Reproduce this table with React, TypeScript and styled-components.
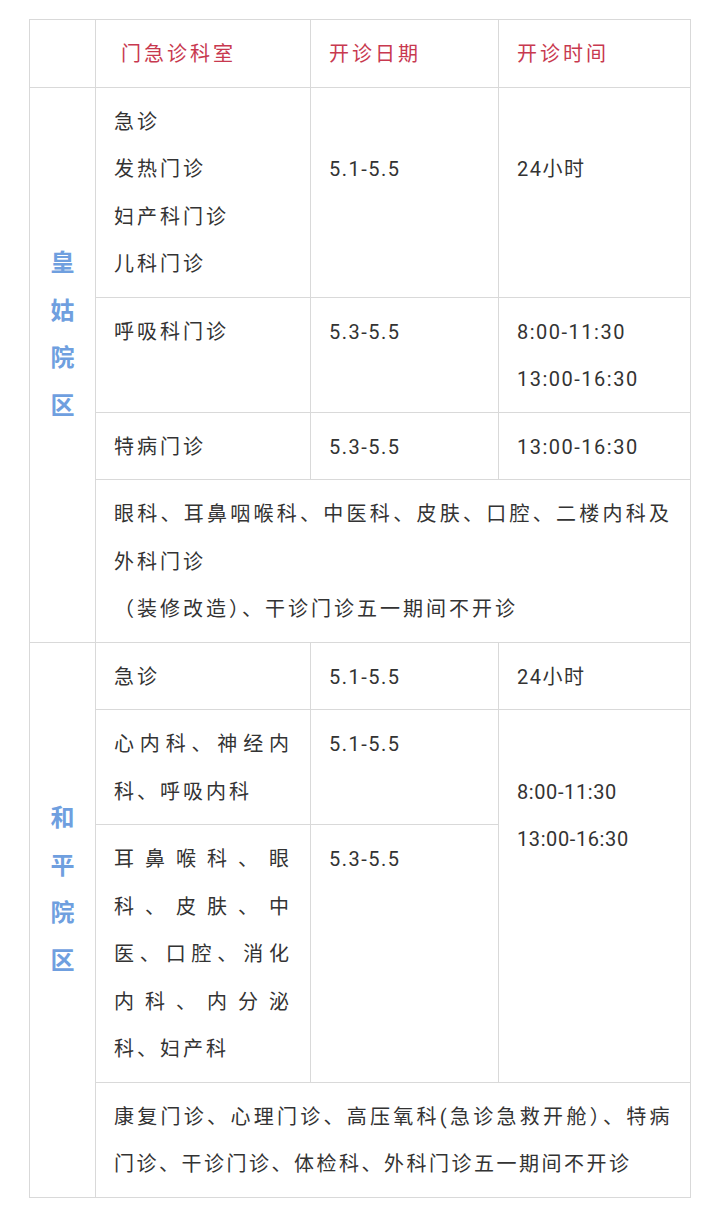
import styled, { createGlobalStyle } from 'styled-components';

const GlobalStyle = createGlobalStyle`
    html, body {
        margin: 0;
        padding: 0;
        background: #fff;
    }
    body {
        font-family: Roboto, 'Noto Sans CJK SC', sans-serif;
        color: #333;
    }
`;

const Page = styled.div`
    padding: 19px 0 0 29px;
`;

const Table = styled.table`
    width: 661px;
    table-layout: fixed;
    border-collapse: collapse;
    font-size: 20px;
    line-height: 47.5px;
`;

const Cell = styled.td<{ $head?: boolean; $spaced?: boolean; $justify?: boolean; $indent?: number }>`
    border: 1px solid #d9d9d9;
    padding: 11px 18px 8px;
    vertical-align: top;
    color: ${(p) => (p.$head ? '#c8394f' : '#333')};
    letter-spacing: ${(p) => (p.$spaced ? '3px' : '1.5px')};
    text-align: ${(p) => (p.$justify ? 'justify' : 'left')};
    text-indent: ${(p) => p.$indent ?? 0}px;
    word-break: break-all;
`;

// cell whose text starts one line down (as in the source sheet)
const OffsetCell = styled(Cell)`
    padding-top: 58.5px;
`;

const CampusCell = styled.td`
    border: 1px solid #d9d9d9;
    padding: 11px 0 70px;
    vertical-align: middle;
    text-align: center;
    color: #6f9fdf;
    font-weight: bold;
    font-size: 24px;
    line-height: 47.5px;
`;

const Line = styled.div``;

const Note = styled(Cell)<{ $tight?: boolean }>`
    letter-spacing: ${(p) => (p.$tight ? '2.5px' : '3px')};
`;

const TightNumbers = styled(OffsetCell)`
    letter-spacing: 0.6px;
`;

export default function App() {
    return (
        <>
            <GlobalStyle />
            <Page>
                <Table>
                    <colgroup>
                        <col style={{ width: 66 }} />
                        <col style={{ width: 215 }} />
                        <col style={{ width: 188 }} />
                        <col style={{ width: 192 }} />
                    </colgroup>
                    <tbody>
                        <tr>
                            <Cell />
                            <Cell $head $spaced $indent={7}>门急诊科室</Cell>
                            <Cell $head $spaced>开诊日期</Cell>
                            <Cell $head $spaced>开诊时间</Cell>
                        </tr>
                        <tr>
                            <CampusCell rowSpan={4}>
                                <Line>皇</Line>
                                <Line>姑</Line>
                                <Line>院</Line>
                                <Line>区</Line>
                            </CampusCell>
                            <Cell $spaced>
                                <Line>急诊</Line>
                                <Line>发热门诊</Line>
                                <Line>妇产科门诊</Line>
                                <Line>儿科门诊</Line>
                            </Cell>
                            <OffsetCell>5.1-5.5</OffsetCell>
                            <OffsetCell>24小时</OffsetCell>
                        </tr>
                        <tr>
                            <Cell $spaced>呼吸科门诊</Cell>
                            <Cell>5.3-5.5</Cell>
                            <Cell>
                                <Line>8:00-11:30</Line>
                                <Line>13:00-16:30</Line>
                            </Cell>
                        </tr>
                        <tr>
                            <Cell $spaced>特病门诊</Cell>
                            <Cell>5.3-5.5</Cell>
                            <Cell>13:00-16:30</Cell>
                        </tr>
                        <tr>
                            <Note colSpan={3} $justify>
                                眼科、耳鼻咽喉科、中医科、皮肤、口腔、二楼内科及外科门诊
                                <br />
                                （装修改造）、干诊门诊五一期间不开诊
                            </Note>
                        </tr>
                        <tr>
                            <CampusCell rowSpan={5}>
                                <Line>和</Line>
                                <Line>平</Line>
                                <Line>院</Line>
                                <Line>区</Line>
                            </CampusCell>
                            <Cell $spaced>急诊</Cell>
                            <Cell>5.1-5.5</Cell>
                            <Cell>24小时</Cell>
                        </tr>
                        <tr>
                            <Cell $spaced $justify>心内科、神经内科、呼吸内科</Cell>
                            <Cell>5.1-5.5</Cell>
                            <TightNumbers rowSpan={2}>
                                <Line>8:00-11:30</Line>
                                <Line>13:00-16:30</Line>
                            </TightNumbers>
                        </tr>
                        <tr>
                            <Cell $spaced $justify>耳鼻喉科、眼科、皮肤、中医、口腔、消化内科、内分泌科、妇产科</Cell>
                            <Cell>5.3-5.5</Cell>
                        </tr>
                        <tr>
                            <Note colSpan={3} $justify $tight>
                                康复门诊、心理门诊、高压氧科(急诊急救开舱）、特病门诊、干诊门诊、体检科、外科门诊五一期间不开诊
                            </Note>
                        </tr>
                    </tbody>
                </Table>
            </Page>
        </>
    );
}
